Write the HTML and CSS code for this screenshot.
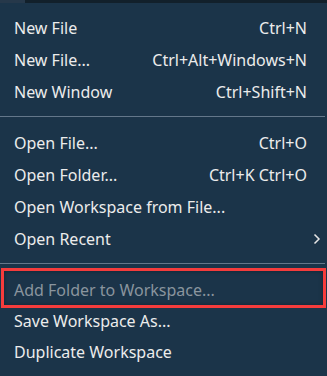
FILE: index.html
```html
<!DOCTYPE html>
<html lang="en">
<head>
    <meta charset="UTF-8">
    <meta name="viewport" content="width=device-width, initial-scale=1.0">
    <title>File Menu</title>
    <link rel="stylesheet" href="styles.css">
</head>
<body>
    <div class="menubar">
        <div class="menubar-active"></div>
    </div>
    <div class="menu">
        <div class="menu-item"><span>New File</span><span class="keys">Ctrl+N</span></div>
        <div class="menu-item"><span>New File...</span><span class="keys">Ctrl+Alt+Windows+N</span></div>
        <div class="menu-item"><span>New Window</span><span class="keys">Ctrl+Shift+N</span></div>
        <div class="separator"></div>
        <div class="menu-item"><span>Open File...</span><span class="keys">Ctrl+O</span></div>
        <div class="menu-item"><span>Open Folder...</span><span class="keys">Ctrl+K Ctrl+O</span></div>
        <div class="menu-item"><span>Open Workspace from File...</span></div>
        <div class="menu-item submenu">
            <span>Open Recent</span>
            <svg class="chevron" width="8" height="12" viewBox="0 0 8 12">
                <path d="M1.5 1.5 L6 6 L1.5 10.5" fill="none" stroke="#e6e6e6" stroke-width="1.5"/>
            </svg>
        </div>
        <div class="separator"></div>
        <div class="menu-item disabled highlighted"><span>Add Folder to Workspace...</span></div>
        <div class="menu-item"><span>Save Workspace As...</span></div>
        <div class="menu-item"><span>Duplicate Workspace</span></div>
    </div>
</body>
</html>
```

FILE: styles.css
```css
body {
    margin: 0;
    background-color: #1b3449;
    font-family: 'Noto Sans', 'Open Sans', sans-serif;
    font-size: 16px;
    color: #ececec;
    overflow: hidden;
}
.menubar {
    height: 3px;
    background-color: #12202b;
}
.menubar-active {
    width: 25px;
    height: 3px;
    background-color: #26384a;
}
.menu {
    padding-top: 9px;
}
.menu-item {
    position: relative;
    display: flex;
    justify-content: space-between;
    align-items: center;
    height: 32px;
    padding: 0 20px 0 14px;
    white-space: nowrap;
}
.submenu {
    padding-right: 6px;
}
.chevron {
    display: block;
}
.separator {
    height: 1px;
    margin: 8px 2px 10px 0;
    background-color: #64778a;
}
.disabled {
    color: #8a959e;
}
.highlighted {
    height: 31px;
}
.highlighted::after {
    content: '';
    position: absolute;
    top: -6px;
    bottom: -3px;
    left: 1px;
    right: 1px;
    border: 3px solid #f53c3c;
    box-shadow: inset 0 0 4px rgba(0, 0, 0, 0.35);
}
.highlighted ~ .menu-item {
    height: 31px;
}
```
